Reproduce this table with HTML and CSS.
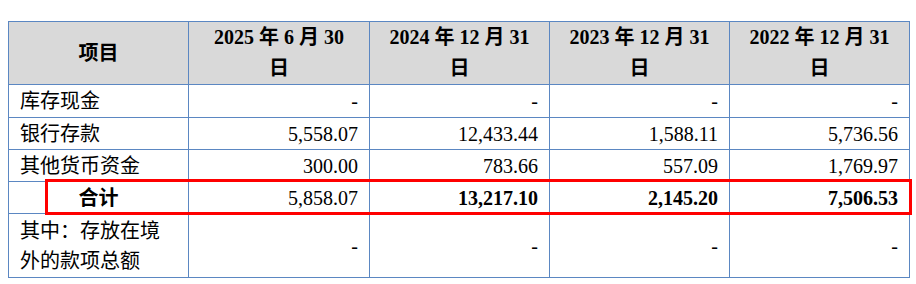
FILE: index.html
```html
<!DOCTYPE html>
<html lang="zh-CN">
<head>
<meta charset="utf-8">
<link rel="stylesheet" href="styles.css">
</head>
<body>
<div class="page">
  <table class="fin">
    <colgroup>
      <col class="c1"><col class="c2"><col class="c3"><col class="c4"><col class="c5">
    </colgroup>
    <thead>
      <tr class="head">
        <th>项目</th>
        <th>2025 年 6 月 30<br>日</th>
        <th>2024 年 12 月 31<br>日</th>
        <th>2023 年 12 月 31<br>日</th>
        <th>2022 年 12 月 31<br>日</th>
      </tr>
    </thead>
    <tbody>
      <tr class="r33">
        <td class="label">库存现金</td>
        <td class="num">-</td><td class="num">-</td><td class="num">-</td><td class="num">-</td>
      </tr>
      <tr class="r32">
        <td class="label">银行存款</td>
        <td class="num">5,558.07</td><td class="num">12,433.44</td><td class="num">1,588.11</td><td class="num">5,736.56</td>
      </tr>
      <tr class="r32">
        <td class="label">其他货币资金</td>
        <td class="num">300.00</td><td class="num">783.66</td><td class="num">557.09</td><td class="num">1,769.97</td>
      </tr>
      <tr class="r32">
        <td class="label total">合计</td>
        <td class="num">5,858.07</td><td class="num b">13,217.10</td><td class="num b">2,145.20</td><td class="num b">7,506.53</td>
      </tr>
      <tr class="r64">
        <td class="label wrap">其中：存放在境外的款项总额</td>
        <td class="num">-</td><td class="num">-</td><td class="num">-</td><td class="num">-</td>
      </tr>
    </tbody>
  </table>
  <div class="highlight"></div>
</div>
</body>
</html>
```

FILE: styles.css
```css
html, body {
  margin: 0;
  padding: 0;
  background: #ffffff;
}

.page {
  position: relative;
  padding: 21px 8px 0 8px;
  width: 916px;
  height: 284px;
  box-sizing: border-box;
}

.fin {
  border-collapse: collapse;
  table-layout: fixed;
  width: 901px;
  font-family: "Liberation Serif", "Noto Sans CJK SC", serif;
  font-size: 20px;
  color: #000;
}

.c1 { width: 180px; }
.c2 { width: 181px; }
.c3 { width: 180px; }
.c4 { width: 180px; }
.c5 { width: 180px; }

.fin th,
.fin td {
  border: 1px solid #5b87c2;
  padding: 0 11px;
  vertical-align: middle;
}

.head th {
  background: #d9d9d9;
  font-weight: bold;
  text-align: center;
  line-height: 31px;
  height: 62px;
  padding-top: 0;
  padding-bottom: 0;
}

.r33 td { height: 32px; }
.r32 td { height: 31px; }
.r64 td { height: 63px; }

.fin td {
  line-height: 28px;
}

.label {
  text-align: left;
  padding-left: 12px;
}

.label.total {
  text-align: center;
  font-weight: bold;
}

.label.wrap {
  line-height: 30px;
  padding-right: 14px;
}

.num {
  text-align: right;
}

.num.b {
  font-weight: bold;
}

.highlight {
  position: absolute;
  left: 45px;
  top: 179px;
  width: 867px;
  height: 36px;
  border: 3px solid #ff0000;
  box-sizing: border-box;
  pointer-events: none;
}
```
